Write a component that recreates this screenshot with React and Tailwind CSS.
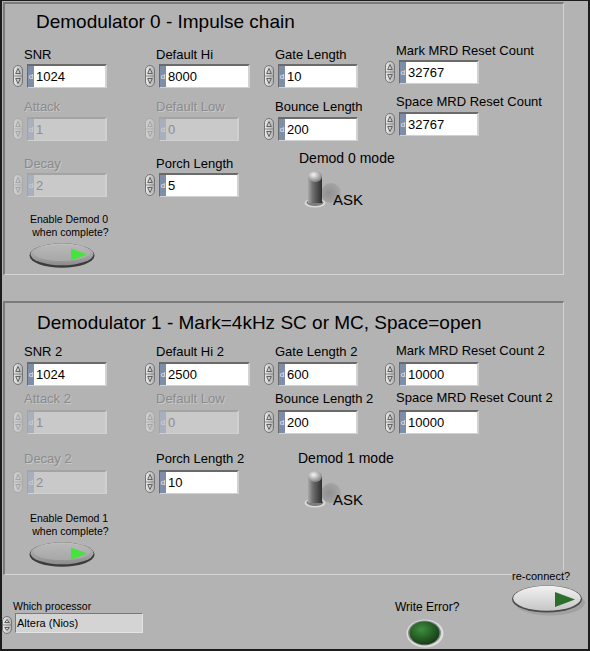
import React from "react";

function Spinner({ disabled, h = 24 }) {
  const stroke = disabled ? "#a9a9a9" : "#767676";
  const arrow = disabled ? "#a0a0a0" : "#555";
  return (
    <svg width="10" height={h} viewBox={`0 0 10 ${h}`} className="shrink-0">
      <defs>
        <linearGradient id={disabled ? "spd" : "spn"} x1="0" y1="0" x2="1" y2="0">
          <stop offset="0" stopColor={disabled ? "#d2d2d2" : "#ececec"} />
          <stop offset="1" stopColor={disabled ? "#bdbdbd" : "#b0b0b0"} />
        </linearGradient>
      </defs>
      <rect x="0.5" y="1.5" width="9" height={h - 3} rx="4.5" fill={`url(#${disabled ? "spd" : "spn"})`} stroke={stroke} />
      <path d={`M5 4.5 L7.3 ${h / 2 - 2.5} H2.7 Z`} fill="none" stroke={arrow} strokeWidth="0.9" />
      <path d={`M1 ${h / 2} H9`} stroke={stroke} strokeWidth="0.8" />
      <path d={`M5 ${h - 4.5} L7.3 ${h / 2 + 2.5} H2.7 Z`} fill="none" stroke={arrow} strokeWidth="0.9" />
    </svg>
  );
}

function Num({ value, wide, disabled, className = "" }) {
  return (
    <div className={`flex items-center h-[24px] ${className}`}>
      <Spinner disabled={disabled} />
      <div
        className={`ml-1 flex h-[24px] border-t-2 border-l border-r-2 border-b ${wide ? "w-[91px]" : "w-[80px]"} ${
          disabled
            ? "border-t-[#a4a4a4] border-l-[#a4a4a4] border-r-[#d0d0d0] border-b-[#d0d0d0]"
            : "border-t-[#6a6a6a] border-l-[#6a6a6a] border-r-[#d2d2d2] border-b-[#d2d2d2]"
        }`}
      >
        <div
          className={`w-[6px] flex items-center justify-center text-[8px] leading-none ${
            disabled ? "bg-[#a9b0bd] text-[#d0d4da]" : "bg-[#7f8ea8] text-[#e6ecf5]"
          }`}
        >
          d
        </div>
        <div
          className={`flex-1 pl-[2px] text-[13px] leading-[21px] ${
            disabled ? "bg-[#c9c9c9] text-[#8e8e8e]" : "bg-white text-black"
          }`}
        >
          {value}
        </div>
      </div>
    </div>
  );
}

function Label({ children, disabled, className = "" }) {
  return (
    <div
      className={`ml-[11px] text-[13px] leading-[15px] whitespace-nowrap ${
        disabled ? "text-[#8b8b8b] [text-shadow:1px_1px_0_#c8c8c8]" : "text-black"
      } ${className}`}
    >
      {children}
    </div>
  );
}

function Toggle() {
  return (
    <svg width="29" height="40" viewBox="0 0 29 40" className="shrink-0 overflow-visible">
      <defs>
        <linearGradient id="lev" x1="0" y1="0" x2="1" y2="0">
          <stop offset="0" stopColor="#a8a8a8" />
          <stop offset="0.35" stopColor="#6e6e6e" />
          <stop offset="1" stopColor="#2e2e2e" />
        </linearGradient>
        <radialGradient id="dome" cx="0.4" cy="0.35" r="0.7">
          <stop offset="0" stopColor="#f4f4f4" />
          <stop offset="1" stopColor="#7a7a7a" />
        </radialGradient>
        <radialGradient id="shd" cx="0.4" cy="0.5" r="0.6">
          <stop offset="0" stopColor="#888" />
          <stop offset="1" stopColor="#a4a4a4" />
        </radialGradient>
      </defs>
      <ellipse cx="27" cy="23" rx="10" ry="10" fill="url(#shd)" opacity="0.8" />
      <ellipse cx="11" cy="33" rx="10.5" ry="4.5" fill="#dadada" />
      <ellipse cx="11" cy="32.5" rx="8.5" ry="3.5" fill="#7d7d7d" />
      <rect x="4" y="6" width="14" height="27" fill="url(#lev)" />
      <ellipse cx="11" cy="6.5" rx="7" ry="5.5" fill="url(#dome)" />
    </svg>
  );
}

function EnableBtn() {
  return (
    <svg width="66" height="26" viewBox="0 0 66 26" className="shrink-0">
      <defs>
        <linearGradient id="eb" x1="0" y1="0" x2="0" y2="1">
          <stop offset="0" stopColor="#c0c0c0" />
          <stop offset="1" stopColor="#8c8c8c" />
        </linearGradient>
      </defs>
      <ellipse cx="33" cy="13.5" rx="32.5" ry="12.3" fill="#3c3c3c" />
      <ellipse cx="33" cy="12.3" rx="31.5" ry="11" fill="url(#eb)" />
      <ellipse cx="33" cy="11" rx="28" ry="8" fill="#b4b4b4" opacity="0.6" />
      <path d="M42 6.5 L58 12.5 L42 18.5 Z" fill="#42e63a" />
    </svg>
  );
}

function ReconnectBtn() {
  return (
    <svg width="74" height="32" viewBox="0 0 74 32" className="shrink-0">
      <defs>
        <linearGradient id="rb" x1="0" y1="0" x2="0" y2="1">
          <stop offset="0" stopColor="#f2f2f2" />
          <stop offset="1" stopColor="#c6c6c6" />
        </linearGradient>
      </defs>
      <ellipse cx="38" cy="17.5" rx="35" ry="13" fill="#9a9a9a" opacity="0.7" />
      <ellipse cx="35" cy="14" rx="35" ry="13.5" fill="#4a4a4a" />
      <ellipse cx="35" cy="13.3" rx="33.8" ry="12.5" fill="url(#rb)" />
      <path d="M43 7 L63 14.5 L43 22 Z" fill="#2c6e2c" />
    </svg>
  );
}

function Led() {
  return (
    <svg width="38" height="29" viewBox="0 0 38 29" className="shrink-0">
      <defs>
        <radialGradient id="led" cx="0.4" cy="0.35" r="0.65">
          <stop offset="0" stopColor="#3f8e3f" />
          <stop offset="1" stopColor="#163f16" />
        </radialGradient>
      </defs>
      <ellipse cx="19" cy="14.5" rx="18.5" ry="14" fill="#dcdcdc" />
      <ellipse cx="18.5" cy="14" rx="16.5" ry="12.5" fill="#8a8a8a" />
      <ellipse cx="18.5" cy="14" rx="15" ry="11.5" fill="url(#led)" />
    </svg>
  );
}

function EnableBlock({ n, textClass, btnClass }) {
  return (
    <>
      <div className={`ml-[15px] w-[82px] text-center text-[10.5px] leading-[13px] whitespace-nowrap ${textClass}`}>
        <div>Enable Demod {n}</div>
        <div>&nbsp;when complete?</div>
      </div>
      <div className={`ml-[16px] ${btnClass}`}>
        <EnableBtn />
      </div>
    </>
  );
}

const panelCls =
  "ml-px w-[561px] border-t-2 border-l-2 border-t-[#7b7b7b] border-l-[#7b7b7b] border-r border-b border-r-[#d4d4d4] border-b-[#d4d4d4] flex flex-col";

function Panel0() {
  return (
    <div className={`${panelCls} mt-px h-[273px]`}>
      <div className="mt-[7px] pl-[31px] text-[19px] leading-[22px] whitespace-nowrap">Demodulator 0 - Impulse chain</div>
      <div className="flex">
        <div className="ml-[8px] w-[132px] flex flex-col">
          <Label className="mt-[14px]">SNR</Label>
          <Num className="mt-[2px]" value="1024" />
          <Label className="mt-[11px]" disabled>Attack</Label>
          <Num className="mt-[3px]" value="1" disabled />
          <Label className="mt-[15px]" disabled>Decay</Label>
          <Num className="mt-[2px]" value="2" disabled />
          <EnableBlock n="0" textClass="mt-[16px]" btnClass="mt-[3px]" />
        </div>
        <div className="w-[119px] flex flex-col">
          <Label className="mt-[14px]">Default Hi</Label>
          <Num className="mt-[2px]" value="8000" wide />
          <Label className="mt-[11px]" disabled>Default Low</Label>
          <Num className="mt-[3px]" value="0" disabled />
          <Label className="mt-[15px]">Porch Length</Label>
          <Num className="mt-[2px]" value="5" />
        </div>
        <div className="w-[121px] flex flex-col">
          <Label className="mt-[14px]">Gate Length</Label>
          <Num className="mt-[2px]" value="10" />
          <Label className="mt-[11px]">Bounce Length</Label>
          <Num className="mt-[3px]" value="200" />
          <div className="mt-[9px] ml-[35px] text-[14px] leading-[16px] whitespace-nowrap">Demod 0 mode</div>
          <div className="mt-[4px] ml-[40px] flex items-start">
            <Toggle />
            <div className="mt-[21px] text-[15px] leading-[17px] relative">ASK</div>
          </div>
        </div>
        <div className="flex-1 flex flex-col">
          <Label className="mt-[10px]">Mark MRD Reset Count</Label>
          <Num className="mt-[2px]" value="32767" />
          <Label className="mt-[10px]">Space MRD Reset Count</Label>
          <Num className="mt-[3px]" value="32767" />
        </div>
      </div>
    </div>
  );
}

function Panel1() {
  return (
    <div className={`${panelCls} mt-[26px] h-[274px]`}>
      <div className="mt-[9px] pl-[32px] text-[19px] leading-[22px] whitespace-nowrap">
        Demodulator 1 - Mark=4kHz SC or MC, Space=open
      </div>
      <div className="flex">
        <div className="ml-[8px] w-[132px] flex flex-col">
          <Label className="mt-[10px]">SNR 2</Label>
          <Num className="mt-[3px]" value="1024" />
          <Label className="mt-[5px]" disabled>Attack 2</Label>
          <Num className="mt-[4px]" value="1" disabled />
          <Label className="mt-[17px]" disabled>Decay 2</Label>
          <Num className="mt-[4px]" value="2" disabled />
          <EnableBlock n="1" textClass="mt-[18px]" btnClass="mt-[3px]" />
        </div>
        <div className="w-[119px] flex flex-col">
          <Label className="mt-[10px]">Default Hi 2</Label>
          <Num className="mt-[3px]" value="2500" wide />
          <Label className="mt-[5px]" disabled>Default Low</Label>
          <Num className="mt-[4px]" value="0" disabled />
          <Label className="mt-[17px]">Porch Length 2</Label>
          <Num className="mt-[4px]" value="10" />
        </div>
        <div className="w-[121px] flex flex-col">
          <Label className="mt-[10px]">Gate Length 2</Label>
          <Num className="mt-[3px]" value="600" />
          <Label className="mt-[5px]">Bounce Length 2</Label>
          <Num className="mt-[4px]" value="200" />
          <div className="mt-[16px] ml-[34px] text-[14px] leading-[16px] whitespace-nowrap">Demod 1 mode</div>
          <div className="mt-[4px] ml-[40px] flex items-start">
            <Toggle />
            <div className="mt-[21px] text-[15px] leading-[17px] relative">ASK</div>
          </div>
        </div>
        <div className="flex-1 flex flex-col">
          <Label className="mt-[9px]">Mark MRD Reset Count 2</Label>
          <Num className="mt-[4px]" value="10000" />
          <Label className="mt-[4px]">Space MRD Reset Count 2</Label>
          <Num className="mt-[5px]" value="10000" />
        </div>
      </div>
    </div>
  );
}

function Bottom() {
  return (
    <div className="flex">
      <div className="w-[393px] flex flex-col">
        <div className="mt-[25px] pl-[11px] text-[10.5px] leading-[13px] whitespace-nowrap">Which processor</div>
        <div className="flex items-start">
          <div className="mt-[2px]">
            <Spinner h={20} />
          </div>
          <div className="ml-[3px] w-[128px] h-[20px] bg-[#d4d4d4] border-t border-l border-t-[#7a7a7a] border-l-[#7a7a7a] border-r border-b border-r-[#e4e4e4] border-b-[#e4e4e4] pl-px text-[11px] leading-[18px] whitespace-nowrap">
            Altera (Nios)
          </div>
        </div>
      </div>
      <div className="w-[117px] flex flex-col">
        <div className="mt-[25px] text-[12px] leading-[14px] whitespace-nowrap">Write Error?</div>
        <div className="mt-[5px] ml-[11px]">
          <Led />
        </div>
      </div>
      <div className="flex flex-col">
        <div className="mt-[-5px] text-[11px] leading-[13px] whitespace-nowrap relative bg-[#b3b3b3] self-start">re-connect?</div>
        <div className="mt-[2px]">
          <ReconnectBtn />
        </div>
      </div>
    </div>
  );
}

export default function App() {
  return (
    <div className="w-[590px] h-[651px] bg-[#b3b3b3] border-l-2 border-t border-r-2 border-b-2 border-[#1c1c1c] font-['Liberation_Sans',Arial,sans-serif] text-black overflow-hidden">
      <Panel0 />
      <Panel1 />
      <Bottom />
    </div>
  );
}
